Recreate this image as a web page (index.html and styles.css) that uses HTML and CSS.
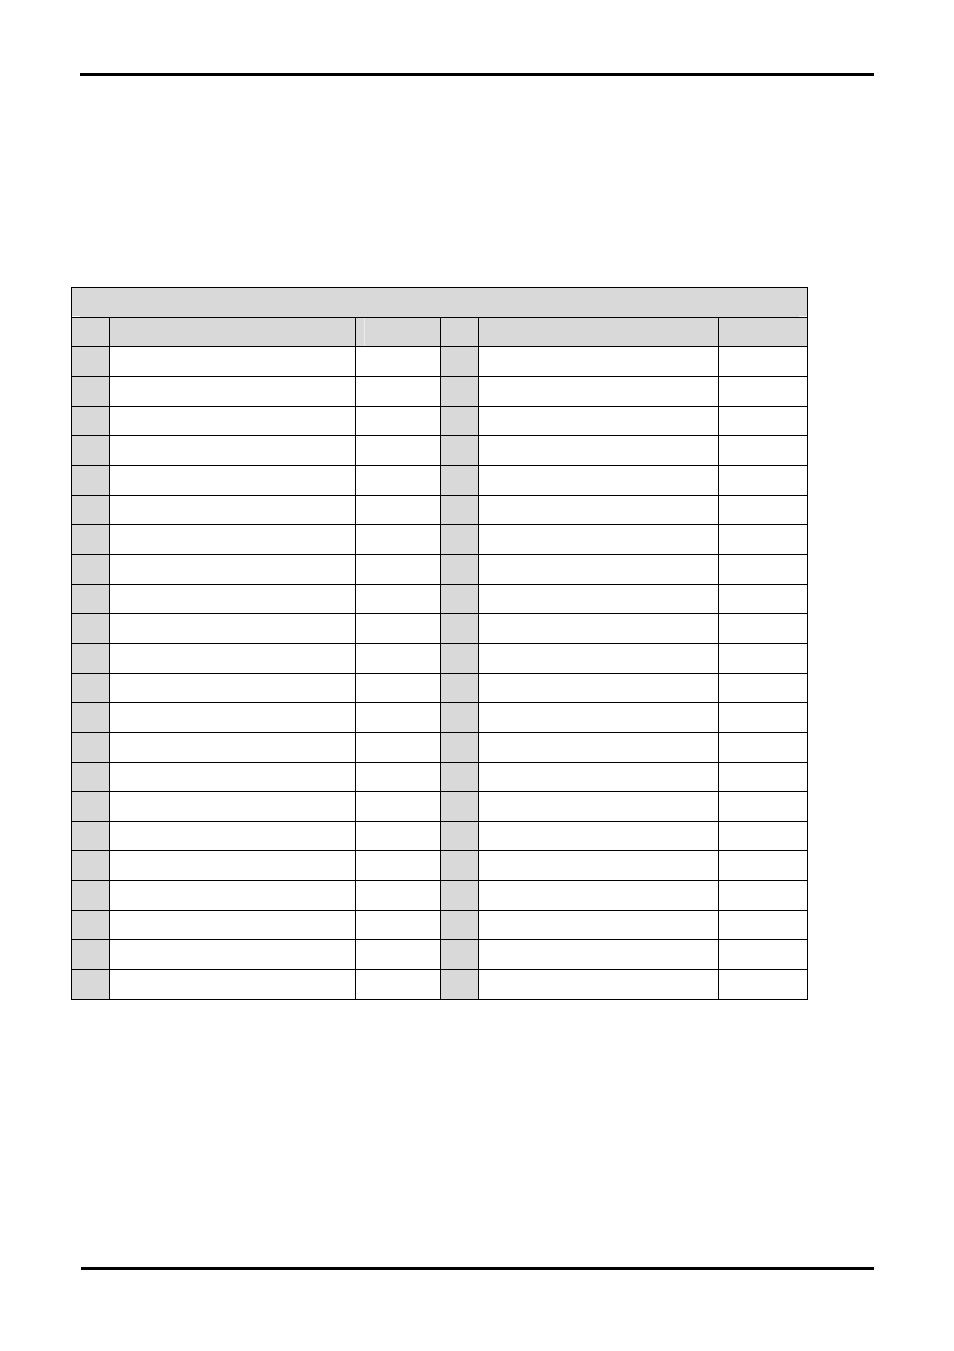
FILE: index.html
```html
<!DOCTYPE html>
<html>
<head>
<meta charset="utf-8">
<link rel="stylesheet" href="styles.css">
</head>
<body>
<div class="page">
  <div class="rule rule-top"></div>
  <div class="grid">
    <div class="cell title"></div>
    <div class="cell g"></div><div class="cell g"></div><div class="cell g mark"></div><div class="cell g"></div><div class="cell g"></div><div class="cell g"></div>
    <div class="cell g"></div><div class="cell"></div><div class="cell"></div><div class="cell g"></div><div class="cell"></div><div class="cell"></div>
    <div class="cell g"></div><div class="cell"></div><div class="cell"></div><div class="cell g"></div><div class="cell"></div><div class="cell"></div>
    <div class="cell g"></div><div class="cell"></div><div class="cell"></div><div class="cell g"></div><div class="cell"></div><div class="cell"></div>
    <div class="cell g"></div><div class="cell"></div><div class="cell"></div><div class="cell g"></div><div class="cell"></div><div class="cell"></div>
    <div class="cell g"></div><div class="cell"></div><div class="cell"></div><div class="cell g"></div><div class="cell"></div><div class="cell"></div>
    <div class="cell g"></div><div class="cell"></div><div class="cell"></div><div class="cell g"></div><div class="cell"></div><div class="cell"></div>
    <div class="cell g"></div><div class="cell"></div><div class="cell"></div><div class="cell g"></div><div class="cell"></div><div class="cell"></div>
    <div class="cell g"></div><div class="cell"></div><div class="cell"></div><div class="cell g"></div><div class="cell"></div><div class="cell"></div>
    <div class="cell g"></div><div class="cell"></div><div class="cell"></div><div class="cell g"></div><div class="cell"></div><div class="cell"></div>
    <div class="cell g"></div><div class="cell"></div><div class="cell"></div><div class="cell g"></div><div class="cell"></div><div class="cell"></div>
    <div class="cell g"></div><div class="cell"></div><div class="cell"></div><div class="cell g"></div><div class="cell"></div><div class="cell"></div>
    <div class="cell g"></div><div class="cell"></div><div class="cell"></div><div class="cell g"></div><div class="cell"></div><div class="cell"></div>
    <div class="cell g"></div><div class="cell"></div><div class="cell"></div><div class="cell g"></div><div class="cell"></div><div class="cell"></div>
    <div class="cell g"></div><div class="cell"></div><div class="cell"></div><div class="cell g"></div><div class="cell"></div><div class="cell"></div>
    <div class="cell g"></div><div class="cell"></div><div class="cell"></div><div class="cell g"></div><div class="cell"></div><div class="cell"></div>
    <div class="cell g"></div><div class="cell"></div><div class="cell"></div><div class="cell g"></div><div class="cell"></div><div class="cell"></div>
    <div class="cell g"></div><div class="cell"></div><div class="cell"></div><div class="cell g"></div><div class="cell"></div><div class="cell"></div>
    <div class="cell g"></div><div class="cell"></div><div class="cell"></div><div class="cell g"></div><div class="cell"></div><div class="cell"></div>
    <div class="cell g"></div><div class="cell"></div><div class="cell"></div><div class="cell g"></div><div class="cell"></div><div class="cell"></div>
    <div class="cell g"></div><div class="cell"></div><div class="cell"></div><div class="cell g"></div><div class="cell"></div><div class="cell"></div>
    <div class="cell g"></div><div class="cell"></div><div class="cell"></div><div class="cell g"></div><div class="cell"></div><div class="cell"></div>
    <div class="cell g"></div><div class="cell"></div><div class="cell"></div><div class="cell g"></div><div class="cell"></div><div class="cell"></div>
  </div>
  <div class="rule rule-bottom"></div>
</div>
</body>
</html>
```

FILE: styles.css
```css
html, body {
  margin: 0;
  padding: 0;
  background: #ffffff;
  font-family: "Liberation Sans", Arial, sans-serif;
}

.page {
  width: 954px;
  height: 1351px;
  padding-top: 73px;
  box-sizing: border-box;
  display: flex;
  flex-direction: column;
}

.rule {
  height: 3px;
  background: #000000;
}

.rule-top {
  margin-left: 80px;
  width: 794px;
}

.rule-bottom {
  margin-top: 267px;
  margin-left: 81px;
  width: 793px;
}

.grid {
  margin-top: 211px;
  margin-left: 71px;
  width: 737px;
  box-sizing: border-box;
  padding: 1px;
  background: #000000;
  display: grid;
  grid-template-columns: 37px 245px 84px 37px 239px 88px;
  grid-auto-rows: 28.667px;
  column-gap: 1px;
  row-gap: 1px;
}

.cell {
  background: #ffffff;
}

.cell.g {
  background: #d9d9d9;
}

.cell.title {
  grid-column: 1 / -1;
  background:
    linear-gradient(#ffffff, #ffffff) left bottom / 8px 1px no-repeat,
    linear-gradient(#ffffff, #ffffff) right bottom / 8px 1px no-repeat,
    #d9d9d9;
}

.cell.mark {
  background: linear-gradient(to right, #d9d9d9 8px, #ececec 8px, #ececec 9px, #d9d9d9 9px);
}
```
